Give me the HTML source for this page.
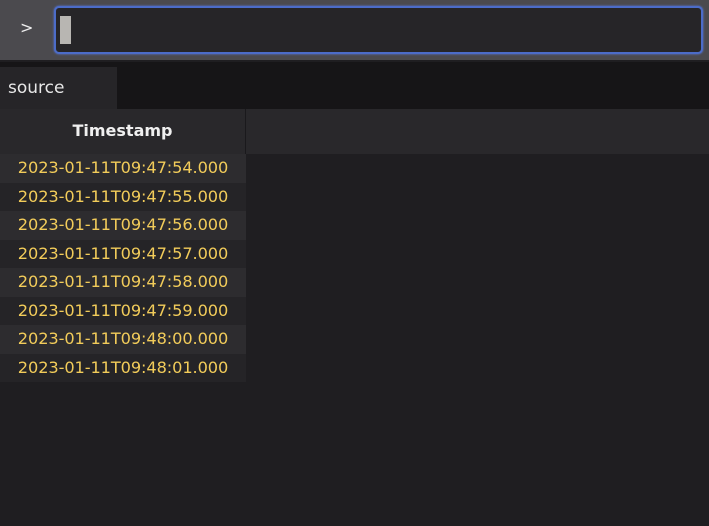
<!DOCTYPE html>
<html><head><style>
*{margin:0;padding:0;box-sizing:border-box}
body{width:709px;height:526px;background:#1f1e21;font-family:"DejaVu Sans","Liberation Sans",sans-serif;overflow:hidden;position:relative}
.top{position:absolute;left:0;top:0;width:709px;height:60px;background:#4b4a4e}
.prompt{position:absolute;left:20px;top:18px;color:#eee;font-size:16px}
.inp{position:absolute;left:54px;top:6px;width:649px;height:48px;background:#262528;border:2px solid #4c6cc8;border-radius:5px;box-shadow:0 0 2px #5a7ae0}
.cur{position:absolute;left:4px;top:8px;width:11px;height:28px;background:#b8b6b2}
.tabbar{position:absolute;left:0;top:62px;width:709px;height:47px;background:#161517}
.tab{position:absolute;left:0;top:67px;width:117px;height:42px;background:#262528;color:#e8e8e8;font-size:17px;padding:11px 0 0 8px}
.hdr{position:absolute;left:0;top:109px;width:709px;height:45px;background:#29282b}
.hcol{position:absolute;left:0;top:109px;width:246px;height:45px;border-right:1px solid #1a191c;color:#f0f0f0;font-weight:bold;font-size:16px;text-align:center;line-height:44px}
.row{position:absolute;left:0;width:246px;height:28.5px;color:#f2cc5a;font-size:16.2px;text-align:center;line-height:28px;letter-spacing:-0.1px;padding-right:0}
.o{background:#2d2c2f}.e{background:#252427}
</style></head><body>
<div class="top"><div class="prompt">&gt;</div><div class="inp"><div class="cur"></div></div></div>
<div class="tabbar"></div>
<div class="tab">source</div>
<div class="hdr"></div>
<div class="hcol">Timestamp</div>
<div class="row o" style="top:154px">2023-01-11T09:47:54.000</div>
<div class="row e" style="top:182.5px">2023-01-11T09:47:55.000</div>
<div class="row o" style="top:211px">2023-01-11T09:47:56.000</div>
<div class="row e" style="top:239.5px">2023-01-11T09:47:57.000</div>
<div class="row o" style="top:268px">2023-01-11T09:47:58.000</div>
<div class="row e" style="top:296.5px">2023-01-11T09:47:59.000</div>
<div class="row o" style="top:325px">2023-01-11T09:48:00.000</div>
<div class="row e" style="top:353.5px">2023-01-11T09:48:01.000</div>
</body></html>
